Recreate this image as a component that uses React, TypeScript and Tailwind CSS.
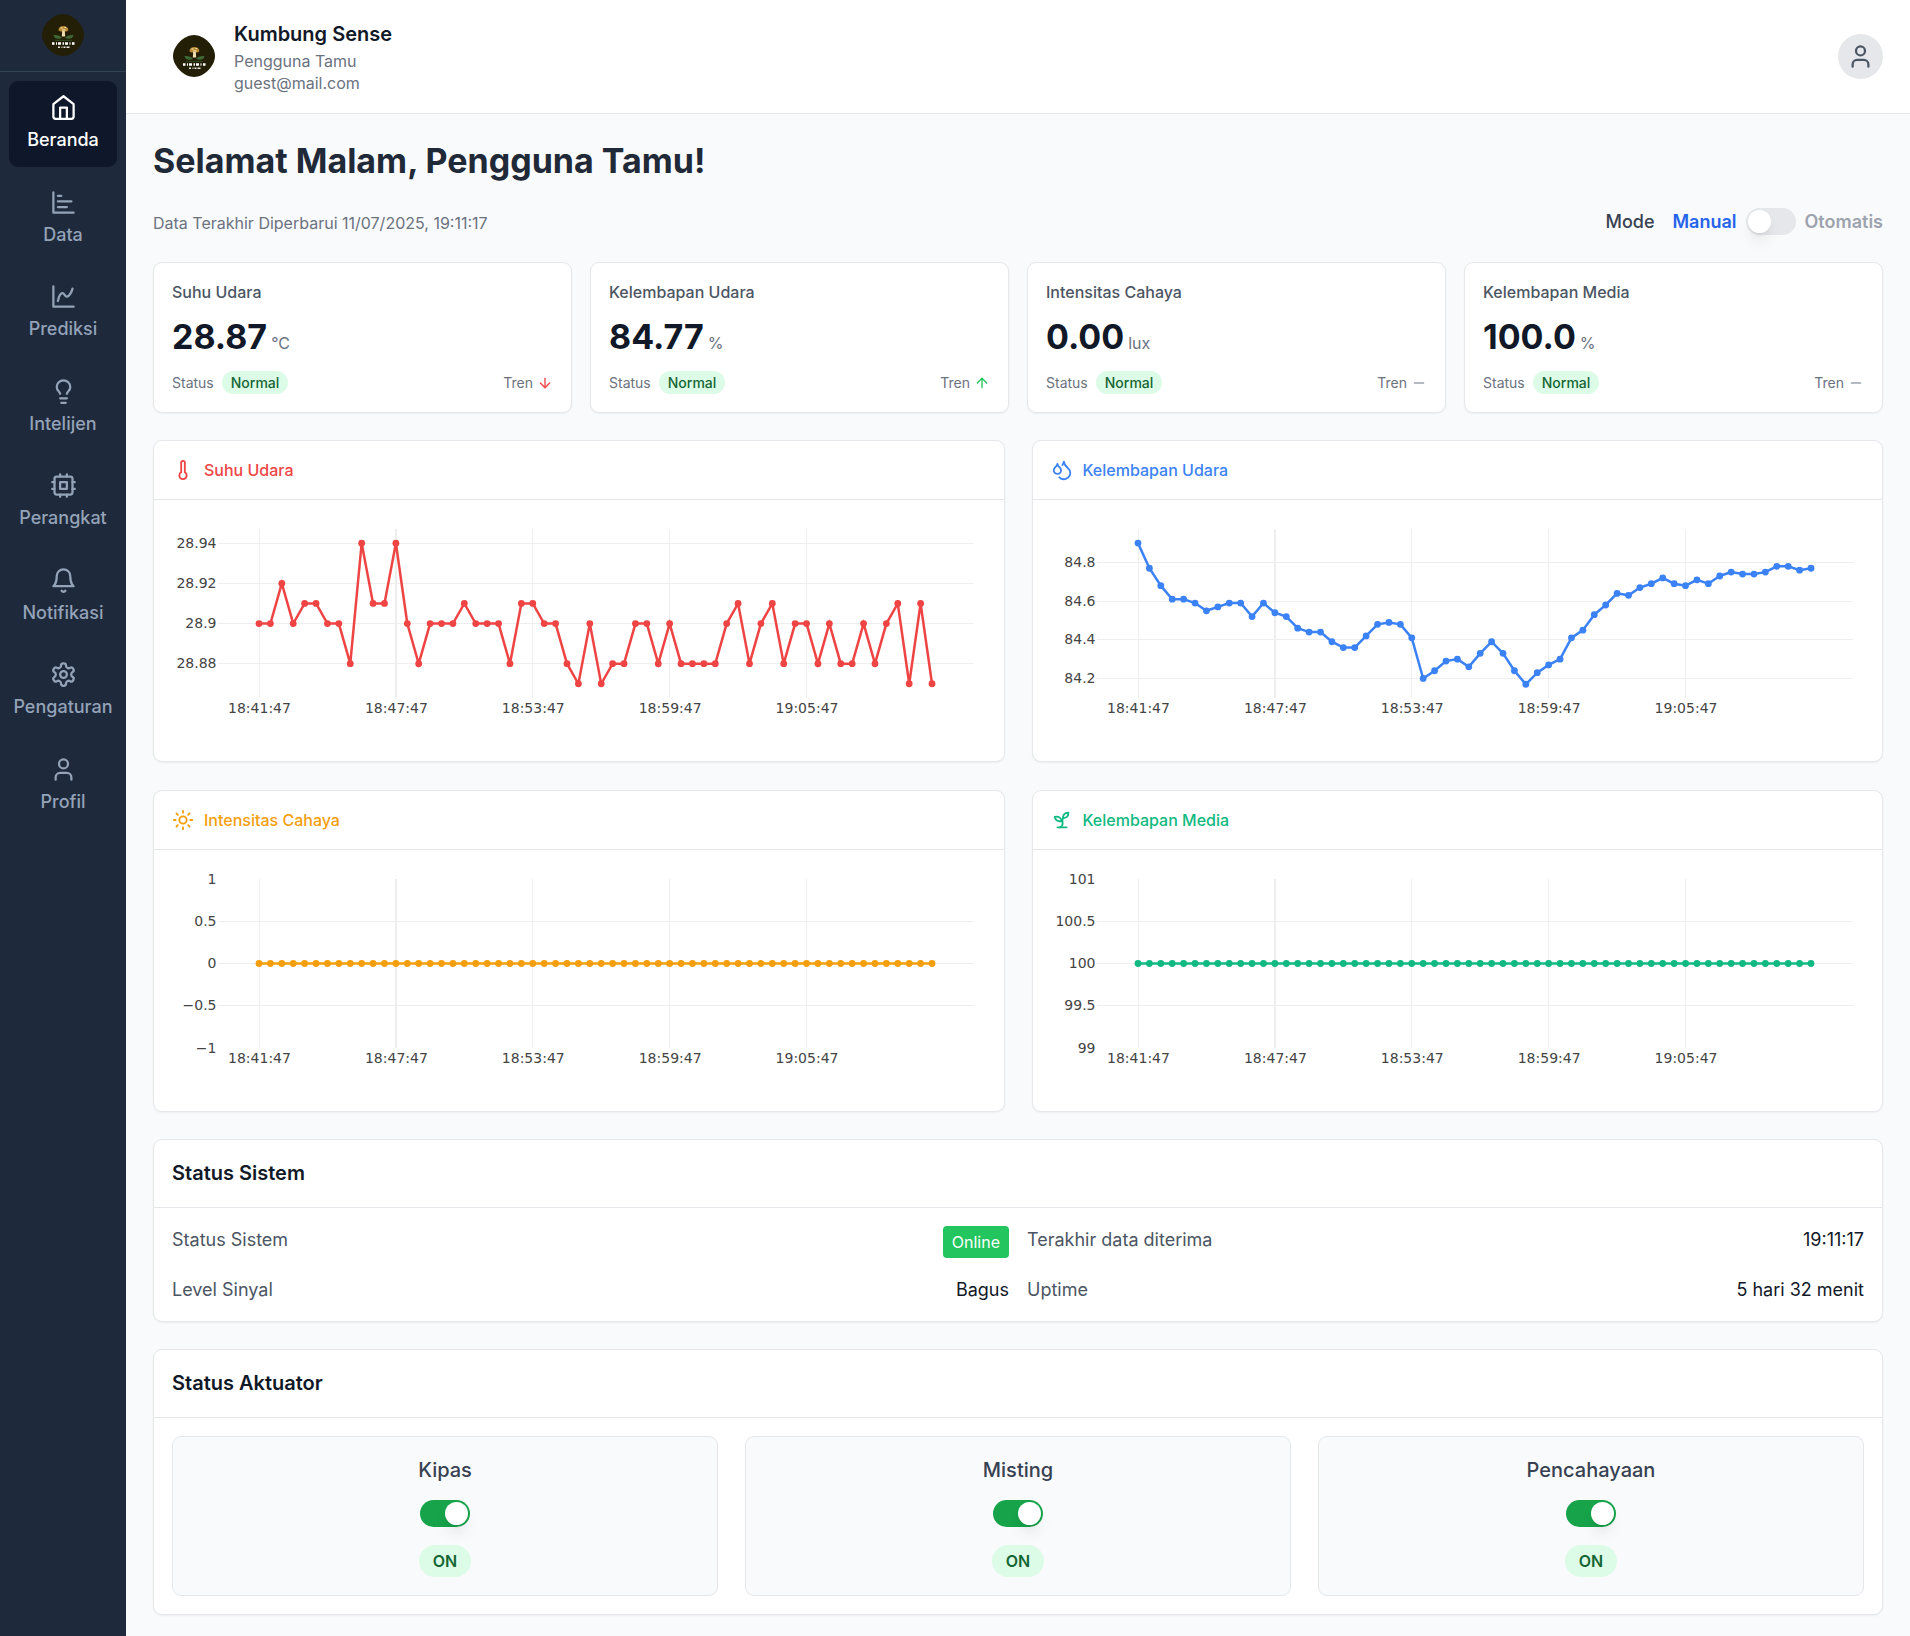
import { useState } from "react";
import type { ReactNode } from "react";
import { ArrowDown, ArrowUp, Droplets, Lightbulb, Minus, Sun, Thermometer, User } from "lucide-react";

type IconComponent = (props: { className?: string }) => ReactNode;

function StrokeIcon({ className, children }: { className?: string; children: ReactNode }) {
  return (
    <svg
      viewBox="0 0 24 24"
      fill="none"
      stroke="currentColor"
      strokeWidth="2"
      strokeLinecap="round"
      strokeLinejoin="round"
      className={className}
      aria-hidden="true"
    >
      {children}
    </svg>
  );
}

const HomeIcon: IconComponent = ({ className }) => (
  <StrokeIcon className={className}>
    <path d="m3 9 9-7 9 7v11a2 2 0 0 1-2 2H5a2 2 0 0 1-2-2z" />
    <path d="M9 22V12h6v10" />
  </StrokeIcon>
);

const BarChartIcon: IconComponent = ({ className }) => (
  <StrokeIcon className={className}>
    <path d="M3 3v18h18" />
    <path d="M7 16h8" />
    <path d="M7 11h12" />
    <path d="M7 6h3" />
  </StrokeIcon>
);

const SplineIcon: IconComponent = ({ className }) => (
  <StrokeIcon className={className}>
    <path d="M3 3v18h18" />
    <path d="M7 16c.5-2 1.500-7 4-7 2 0 2 3 4 3 2.500 0 4.500-5 5-7" />
  </StrokeIcon>
);

const ChipIcon: IconComponent = ({ className }) => (
  <StrokeIcon className={className}>
    <rect x="4" y="4" width="16" height="16" rx="2" />
    <rect x="9" y="9" width="6" height="6" />
    <path d="M15 2v2M15 20v2M2 15h2M2 9h2M20 15h2M20 9h2M9 2v2M9 20v2" />
  </StrokeIcon>
);

const BellIcon: IconComponent = ({ className }) => (
  <StrokeIcon className={className}>
    <path d="M6 8a6 6 0 0 1 12 0c0 7 3 9 3 9H3s3-2 3-9" />
    <path d="M10.300 21a1.940 1.940 0 0 0 3.400 0" />
  </StrokeIcon>
);

const GearIcon: IconComponent = ({ className }) => (
  <StrokeIcon className={className}>
    <path d="M12.22 2h-.44a2 2 0 0 0-2 2v.18a2 2 0 0 1-1 1.73l-.43.25a2 2 0 0 1-2 0l-.15-.08a2 2 0 0 0-2.73.73l-.22.38a2 2 0 0 0 .73 2.73l.15.1a2 2 0 0 1 1 1.72v.51a2 2 0 0 1-1 1.74l-.15.09a2 2 0 0 0-.73 2.73l.22.38a2 2 0 0 0 2.73.73l.15-.08a2 2 0 0 1 2 0l.43.25a2 2 0 0 1 1 1.73V20a2 2 0 0 0 2 2h.44a2 2 0 0 0 2-2v-.18a2 2 0 0 1 1-1.73l.43-.25a2 2 0 0 1 2 0l.15.08a2 2 0 0 0 2.73-.73l.22-.39a2 2 0 0 0-.73-2.73l-.15-.08a2 2 0 0 1-1-1.74v-.5a2 2 0 0 1 1-1.74l.15-.09a2 2 0 0 0 .73-2.73l-.22-.38a2 2 0 0 0-2.73-.73l-.15.08a2 2 0 0 1-2 0l-.43-.25a2 2 0 0 1-1-1.73V4a2 2 0 0 0-2-2z" />
    <circle cx="12" cy="12" r="3" />
  </StrokeIcon>
);

const SproutIcon: IconComponent = ({ className }) => (
  <StrokeIcon className={className}>
    <path d="M7 20h10" />
    <path d="M10 20c5.500-2.500.8-6.400 3-10" />
    <path d="M9.500 9.400c1.100.8 1.800 2.200 2.300 3.700-2 .4-3.500.4-4.800-.3-1.200-.6-2.300-1.900-3-4.200 2.800-.5 4.400 0 5.500.8z" />
    <path d="M14.100 6a7 7 0 0 0-1.100 4c1.900-.1 3.300-.6 4.300-1.400 1-1 1.600-2.300 1.700-4.600-2.700.1-4 1-4.900 2z" />
  </StrokeIcon>
);

function Logo({ className }: { className: string }) {
  return (
    <svg viewBox="0 0 42 42" className={className} role="img" aria-label="Logo Kumbung Sense">
      <path d="M21 0C31 0 42 11 42 21S31 42 21 42 0 31 0 21 11 0 21 0Z" fill="#231f06" />
      <path d="M16.500 16c0-2.400 2.200-3.900 4.900-3.900s4.900 1.500 4.900 3.900c0 1.200-2 1.500-4.900 1.500s-4.900-.3-4.900-1.500Z" fill="#b98a35" />
      <path d="M18.500 14h2M22.500 13.500h1.500M20 16h3.500" stroke="#fff1c4" strokeWidth="1.100" />
      <path d="M20.200 17h2.600l.4 5.500h-3.400Z" fill="#f3dfae" />
      <path
        d="M11.500 21c3.500-.3 7 .5 8.500 3-3 1.600-8 1-8.500-3ZM31.500 21c-3.500-.3-7 .5-8.500 3 3 1.600 8 1 8.500-3Z"
        fill="#3f6a35"
      />
      <path d="M13 26.300h17" stroke="#2f4c25" strokeWidth="1" />
      <path
        d="M10 29.500h2.500M14 29.500h1M16 29.500h3M20.500 29.500h1.500M23 29.500h3M27.500 29.500h1M30 29.500h2.500"
        stroke="#ffffff"
        strokeWidth="2.600"
      />
      <path d="M16 33.300h2M19.500 33.300h1M21.500 33.300h2M24.500 33.300h3" stroke="#e8e8e0" strokeWidth="1.500" />
    </svg>
  );
}

const navItems: { label: string; icon: IconComponent }[] = [
  { label: "Beranda", icon: HomeIcon },
  { label: "Data", icon: BarChartIcon },
  { label: "Prediksi", icon: SplineIcon },
  { label: "Intelijen", icon: ({ className }) => <Lightbulb className={className} /> },
  { label: "Perangkat", icon: ChipIcon },
  { label: "Notifikasi", icon: BellIcon },
  { label: "Pengaturan", icon: GearIcon },
  { label: "Profil", icon: ({ className }) => <User className={className} /> },
];

function Sidebar() {
  return (
    <aside className="w-[126px] shrink-0 bg-[#1e293b]">
      <div className="flex h-[72px] justify-center border-b border-[#334155] pt-[14px]">
        <Logo className="size-[42px]" />
      </div>
      <nav className="grid h-[765px] auto-rows-fr gap-[9px] p-[9px]">
        {navItems.map(({ label, icon: Icon }, index) => (
          <a
            key={label}
            href={`#${label.toLowerCase()}`}
            aria-current={index === 0 ? "page" : undefined}
            className={
              index === 0
                ? "flex flex-col items-center justify-center gap-[5px] rounded-[9px] bg-[#0f172a] text-lg/[27px] font-medium text-white"
                : "flex flex-col items-center justify-center gap-[5px] rounded-[9px] text-lg/[27px] font-medium text-[#94a3b8]"
            }
          >
            <Icon className="size-[27px]" />
            {label}
          </a>
        ))}
      </nav>
    </aside>
  );
}

function Toggle({
  checked,
  onChange,
  label,
}: {
  checked: boolean;
  onChange: (next: boolean) => void;
  label: string;
}) {
  return (
    <button
      type="button"
      role="switch"
      aria-checked={checked}
      aria-label={label}
      onClick={() => onChange(!checked)}
      className={
        checked
          ? "flex h-[27px] w-[50px] justify-end rounded-full bg-[#16a34a] p-[2px]"
          : "flex h-[27px] w-[50px] justify-start rounded-full bg-[#e5e7eb] p-[2px]"
      }
    >
      <span className="size-[23px] rounded-full bg-white shadow-lg" />
    </button>
  );
}

type Trend = "down" | "up" | "flat";

const stats: { label: string; value: string; unit: string; trend: Trend }[] = [
  { label: "Suhu Udara", value: "28.87", unit: "°C", trend: "down" },
  { label: "Kelembapan Udara", value: "84.77", unit: "%", trend: "up" },
  { label: "Intensitas Cahaya", value: "0.00", unit: "lux", trend: "flat" },
  { label: "Kelembapan Media", value: "100.0", unit: "%", trend: "flat" },
];

function TrendIcon({ trend }: { trend: Trend }) {
  if (trend === "down") return <ArrowDown className="size-4 text-[#ef4444]" />;
  if (trend === "up") return <ArrowUp className="size-4 text-[#22c55e]" />;
  return <Minus className="size-4 text-[#9ca3af]" />;
}

function StatCard({ label, value, unit, trend }: (typeof stats)[number]) {
  return (
    <article className="rounded-[9px] border border-[#e5e7eb] bg-white p-[18px] shadow-xs">
      <h2 className="text-base/[22px] font-medium text-[#4b5563]">{label}</h2>
      <p className="mt-[13px] flex items-baseline gap-1">
        <span className="text-[34px]/[41px] font-bold text-[#111827]">{value}</span>
        <span className="text-base/[22px] text-[#6b7280]">{unit}</span>
      </p>
      <div className="mt-[14px] flex items-center justify-between text-sm/[23px] text-[#6b7280]">
        <div className="flex items-center gap-2">
          Status
          <span className="rounded-full bg-[#dcfce7] px-[9px] font-medium text-[#166534]">Normal</span>
        </div>
        <div className="flex items-center gap-1">
          Tren
          <TrendIcon trend={trend} />
        </div>
      </div>
    </article>
  );
}

const temperature = [
  28.9, 28.9, 28.92, 28.9, 28.91, 28.91, 28.9, 28.9, 28.88, 28.94, 28.91, 28.91, 28.94, 28.9, 28.88, 28.9, 28.9, 28.9,
  28.91, 28.9, 28.9, 28.9, 28.88, 28.91, 28.91, 28.9, 28.9, 28.88, 28.87, 28.9, 28.87, 28.88, 28.88, 28.9, 28.9, 28.88,
  28.9, 28.88, 28.88, 28.88, 28.88, 28.9, 28.91, 28.88, 28.9, 28.91, 28.88, 28.9, 28.9, 28.88, 28.9, 28.88, 28.88, 28.9,
  28.88, 28.9, 28.91, 28.87, 28.91, 28.87,
];

const humidity = [
  84.9, 84.77, 84.68, 84.61, 84.61, 84.59, 84.55, 84.57, 84.59, 84.59, 84.52, 84.59, 84.54, 84.52, 84.46, 84.44, 84.44,
  84.39, 84.36, 84.36, 84.42, 84.48, 84.49, 84.48, 84.41, 84.2, 84.24, 84.29, 84.3, 84.26, 84.33, 84.39, 84.33, 84.24,
  84.17, 84.23, 84.27, 84.3, 84.41, 84.45, 84.53, 84.58, 84.64, 84.63, 84.67, 84.69, 84.72, 84.69, 84.68, 84.71, 84.69,
  84.73, 84.75, 84.74, 84.74, 84.75, 84.78, 84.78, 84.76, 84.77,
];

const light = Array.from({ length: 60 }, () => 0);
const soil = Array.from({ length: 60 }, () => 100);

const timeTicks = ["18:41:47", "18:47:47", "18:53:47", "18:59:47", "19:05:47"];

const PLOT = { left: 46, right: 802, top: 11, bottom: 180, firstX: 87, stepX: 11.407 };

type Series = {
  title: string;
  icon: IconComponent;
  titleClass: string;
  color: string;
  data: number[];
  range: [number, number];
  ticks: { value: number; label: string }[];
};

const charts: Series[] = [
  {
    title: "Suhu Udara",
    icon: ({ className }) => <Thermometer className={className} />,
    titleClass: "text-[#ef4444]",
    color: "#ef4444",
    data: temperature,
    range: [28.8629, 28.9471],
    ticks: [
      { value: 28.94, label: "28.94" },
      { value: 28.92, label: "28.92" },
      { value: 28.9, label: "28.9" },
      { value: 28.88, label: "28.88" },
    ],
  },
  {
    title: "Kelembapan Udara",
    icon: ({ className }) => <Droplets className={className} />,
    titleClass: "text-[#3b82f6]",
    color: "#3b82f6",
    data: humidity,
    range: [84.099, 84.973],
    ticks: [
      { value: 84.8, label: "84.8" },
      { value: 84.6, label: "84.6" },
      { value: 84.4, label: "84.4" },
      { value: 84.2, label: "84.2" },
    ],
  },
  {
    title: "Intensitas Cahaya",
    icon: ({ className }) => <Sun className={className} />,
    titleClass: "text-[#f59e0b]",
    color: "#f59e0b",
    data: light,
    range: [-1, 1],
    ticks: [
      { value: 1, label: "1" },
      { value: 0.5, label: "0.5" },
      { value: 0, label: "0" },
      { value: -0.5, label: "−0.5" },
      { value: -1, label: "−1" },
    ],
  },
  {
    title: "Kelembapan Media",
    icon: SproutIcon,
    titleClass: "text-[#10b981]",
    color: "#10b981",
    data: soil,
    range: [99, 101],
    ticks: [
      { value: 101, label: "101" },
      { value: 100.5, label: "100.5" },
      { value: 100, label: "100" },
      { value: 99.5, label: "99.5" },
      { value: 99, label: "99" },
    ],
  },
];

function LineChart({ title, color, data, range, ticks }: Series) {
  const [min, max] = range;
  const toX = (index: number) => PLOT.firstX + index * PLOT.stepX;
  const toY = (value: number) => PLOT.top + ((max - value) / (max - min)) * (PLOT.bottom - PLOT.top);
  const crisp = (n: number) => Math.floor(n) + 0.5;

  return (
    <svg
      viewBox="0 0 813 225"
      preserveAspectRatio="xMinYMin meet"
      className="h-[225px] w-full font-['Verdana','DejaVu_Sans',sans-serif] text-sm"
      role="img"
      aria-label={`Grafik ${title}`}
    >
      {timeTicks.map((label, index) => (
        <g key={label}>
          <line
            x1={index === 1 ? 224 : crisp(toX(index * 12))}
            x2={index === 1 ? 224 : crisp(toX(index * 12))}
            y1={PLOT.top}
            y2={PLOT.bottom}
            stroke="#eeeeee"
            strokeWidth={index === 1 ? 2 : 1}
          />
          <text x={toX(index * 12) + 0.5} y={195} textAnchor="middle" fill="#444444">
            {label}
          </text>
        </g>
      ))}
      {ticks.map(({ value, label }) => {
        const y = crisp(toY(value));
        return (
          <g key={label}>
            {value < max && value > min && (
              <line x1={PLOT.left} x2={PLOT.right} y1={y} y2={y} stroke="#eeeeee" />
            )}
            <text x={44.5} y={y + 4.5} textAnchor="end" fill="#444444">
              {label}
            </text>
          </g>
        );
      })}
      <polyline
        points={data.map((value, index) => `${toX(index)},${toY(value)}`).join(" ")}
        fill="none"
        stroke={color}
        strokeWidth="2.500"
      />
      {data.map((value, index) => (
        <circle key={index} cx={toX(index)} cy={toY(value)} r="3.400" fill={color} />
      ))}
    </svg>
  );
}

function ChartCard(series: Series) {
  const Icon = series.icon;
  return (
    <section className="min-w-0 rounded-[9px] border border-[#e5e7eb] bg-white shadow-xs">
      <header className="border-b border-[#e5e7eb] p-[18px]">
        <h2 className={series.titleClass}>
          <span className="flex items-center gap-[10px] text-base/[22px] font-medium">
            <Icon className="size-[22px]" />
            {series.title}
          </span>
        </h2>
      </header>
      <div className="p-[18px]">
        <LineChart {...series} />
      </div>
    </section>
  );
}

function Panel({ title, children }: { title: string; children: ReactNode }) {
  return (
    <section className="mt-[27px] rounded-[9px] border border-[#e5e7eb] bg-white shadow-xs">
      <header className="border-b border-[#e5e7eb] p-[18px]">
        <h2 className="text-xl/[31px] font-semibold text-[#111827]">{title}</h2>
      </header>
      <div className="p-[18px]">{children}</div>
    </section>
  );
}

function StatusRow({ label, children }: { label: string; children: ReactNode }) {
  return (
    <div className="flex items-start justify-between text-lg/[27px]">
      <dt className="text-[#4b5563]">{label}</dt>
      <dd className="text-[#111827]">{children}</dd>
    </div>
  );
}

function Actuator({ name }: { name: string }) {
  const [on, setOn] = useState(true);
  return (
    <div className="flex flex-col items-center rounded-[9px] border border-[#e5e7eb] bg-[#f9fafb] p-[18px]">
      <h3 className="text-xl/[31px] font-medium text-[#374151]">{name}</h3>
      <div className="mt-[14px]">
        <Toggle checked={on} onChange={setOn} label={name} />
      </div>
      <span className="mt-[18px] rounded-full bg-[#dcfce7] px-[14px] text-base/[32px] font-semibold text-[#166534]">
        {on ? "ON" : "OFF"}
      </span>
    </div>
  );
}

export default function App() {
  const [automatic, setAutomatic] = useState(false);

  return (
    <div className="flex min-h-screen bg-[#f9fafb] font-['Inter',sans-serif]">
      <Sidebar />
      <div className="min-w-0 flex-1">
        <header className="flex items-center justify-between border-b border-[#e5e7eb] bg-white pt-[18px] pr-[27px] pb-[19px] pl-[47px]">
          <div className="flex items-center gap-[19px]">
            <Logo className="size-[42px]" />
            <div>
              <p className="text-xl/[32px] font-semibold text-[#111827]">Kumbung Sense</p>
              <p className="text-base/[22px] text-[#6b7280]">Pengguna Tamu</p>
              <p className="text-base/[22px] text-[#6b7280]">guest@mail.com</p>
            </div>
          </div>
          <button
            type="button"
            aria-label="Profil pengguna"
            className="flex size-[45px] items-center justify-center rounded-full bg-[#e5e7eb] text-[#4b5563]"
          >
            <User className="size-[27px]" />
          </button>
        </header>

        <main className="px-[27px] pt-[27px] pb-5">
          <h1 className="text-[34px]/[40px] font-bold text-[#1f2937]">Selamat Malam, Pengguna Tamu!</h1>

          <div className="mt-[27px] mb-[27px] flex items-end justify-between">
            <p className="text-base/[23px] text-[#6b7280]">Data Terakhir Diperbarui 11/07/2025, 19:11:17</p>
            <div className="flex items-center text-lg/[27px]">
              <span className="mr-[18px] font-medium text-[#374151]">Mode</span>
              <div className="flex items-center gap-[9px] font-semibold">
                <span className={automatic ? "text-[#9ca3af]" : "text-[#2563eb]"}>Manual</span>
                <Toggle checked={automatic} onChange={setAutomatic} label="Mode otomatis" />
                <span className={automatic ? "text-[#2563eb]" : "text-[#9ca3af]"}>Otomatis</span>
              </div>
            </div>
          </div>

          <div className="grid grid-cols-4 gap-[18px]">
            {stats.map((stat) => (
              <StatCard key={stat.label} {...stat} />
            ))}
          </div>

          <div className="mt-[27px] grid grid-cols-2 gap-x-[27px] gap-y-7">
            {charts.map((series) => (
              <ChartCard key={series.title} {...series} />
            ))}
          </div>

          <Panel title="Status Sistem">
            <dl className="grid grid-cols-2 gap-[18px]">
              <StatusRow label="Status Sistem">
                <span className="block rounded bg-[#22c55e] px-[9px] text-base/[32px] text-white">Online</span>
              </StatusRow>
              <StatusRow label="Terakhir data diterima">19:11:17</StatusRow>
              <StatusRow label="Level Sinyal">Bagus</StatusRow>
              <StatusRow label="Uptime">5 hari 32 menit</StatusRow>
            </dl>
          </Panel>

          <Panel title="Status Aktuator">
            <div className="grid grid-cols-3 gap-[27px]">
              <Actuator name="Kipas" />
              <Actuator name="Misting" />
              <Actuator name="Pencahayaan" />
            </div>
          </Panel>
        </main>
      </div>
    </div>
  );
}
